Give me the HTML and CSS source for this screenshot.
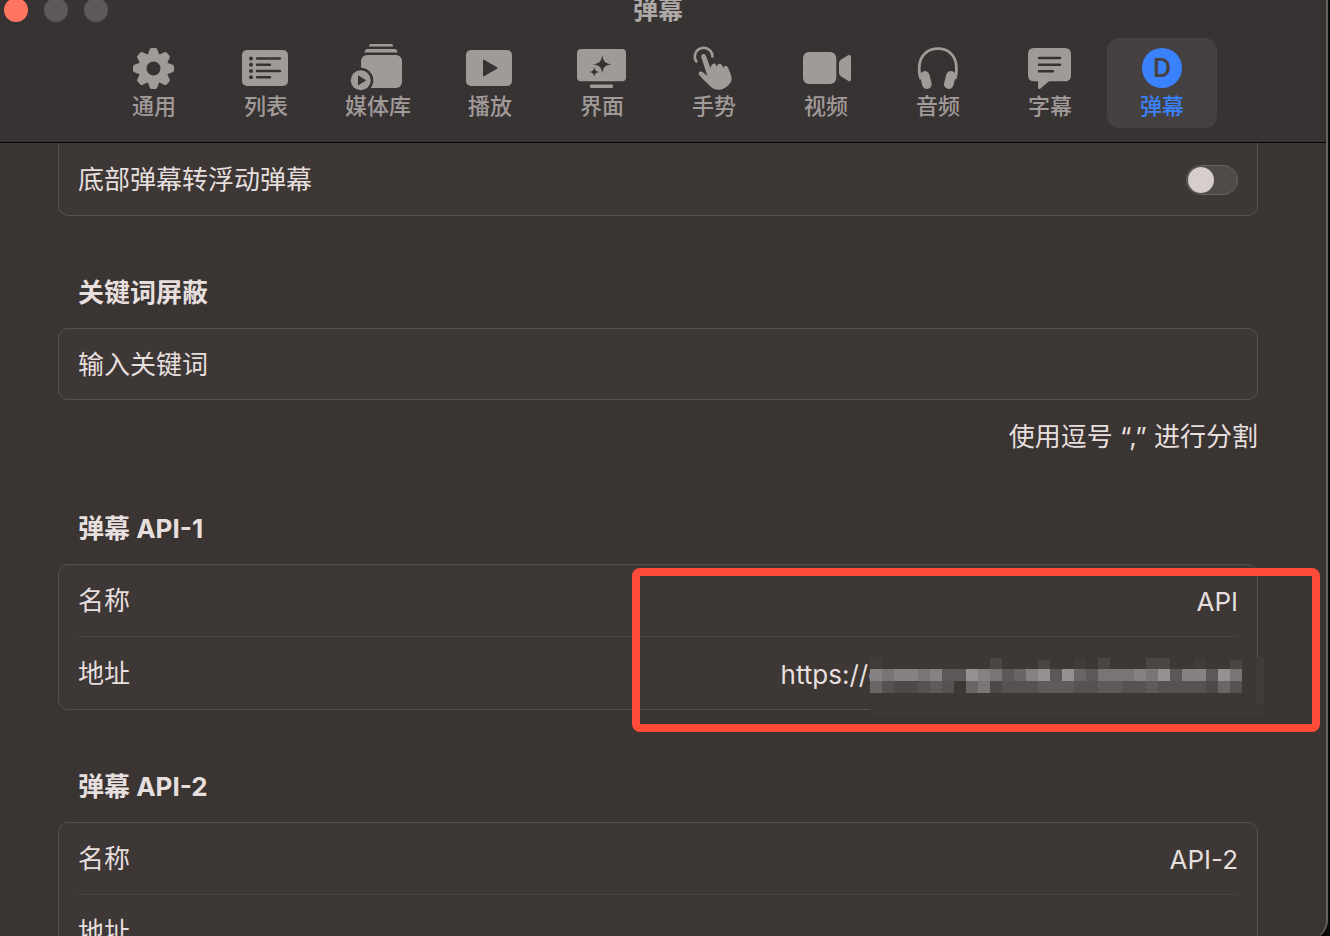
FILE: index.html
```html
<!DOCTYPE html>
<html lang="zh-CN">
<head>
<meta charset="utf-8">
<title>弹幕</title>
<link rel="stylesheet" href="styles.css">
</head>
<body>
<div class="window">
  <header class="toolbar">
    <div class="titlebar">
      <div class="lights">
        <button class="light light-close" aria-label="关闭"></button>
        <button class="light" aria-label="最小化"></button>
        <button class="light" aria-label="缩放"></button>
      </div>
      <h1 class="title">弹幕</h1>
    </div>
    <nav class="tabs">
      <button class="tab">
        <svg class="icon" viewBox="1 0 56 44"><g transform="translate(28.5 22.5)"><circle r="11" fill="none" stroke="currentColor" stroke-width="8"/><g fill="currentColor"><path id="teeth" d="M-6-13L-4-18.5Q-3.500-20.500-2-20.500H2Q3.500-20.500 4-18.500L6-13ZM-6 13L-4 18.500Q-3.500 20.500-2 20.500H2Q3.500 20.500 4 18.500L6 13Z"/><use href="#teeth" transform="rotate(45)"/><use href="#teeth" transform="rotate(90)"/><use href="#teeth" transform="rotate(135)"/></g></g></svg>
        <span>通用</span>
      </button>
      <button class="tab">
        <svg class="icon" viewBox="1 0 56 44"><rect x="5" y="4" width="46" height="36" rx="5" fill="currentColor"/><g class="cut"><circle cx="14" cy="12.500" r="2"/><circle cx="14" cy="18.800" r="2"/><circle cx="14" cy="25" r="2"/><circle cx="14" cy="31.300" r="2"/></g><path class="cut-line" d="M20 12.500H43M20 18.800H33M20 25H43M20 31.300H33"/></svg>
        <span>列表</span>
      </button>
      <button class="tab">
        <svg class="icon" viewBox="1 0 56 44"><g fill="currentColor"><path d="M21-2H43Q44-2 44 .5H20Q20-2 21-2Z"/><path d="M18 3H46Q48 3 48.500 6.500H15.500Q16 3 18 3Z"/><rect x="12" y="9" width="41" height="33" rx="6"/></g><circle class="cut" cx="11.700" cy="34.300" r="12.600"/><circle cx="11.700" cy="34.300" r="10" fill="currentColor"/><path class="cut" d="M9 29.300L17.300 34.300L9 39.500Z"/></svg>
        <span>媒体库</span>
      </button>
      <button class="tab">
        <svg class="icon" viewBox="1 0 56 44"><rect x="5" y="4" width="46" height="36" rx="5" fill="currentColor"/><path class="cut" d="M22 14.600Q22 13 23.500 14L36 21.300Q37 22 36 22.700L23.500 30Q22 31 22 29.400Z"/></svg>
        <span>播放</span>
      </button>
      <button class="tab">
        <svg class="icon" viewBox="1 0 56 44"><g fill="currentColor"><rect x="4" y="3" width="49" height="32.300" rx="4"/><rect x="17" y="38.600" width="23" height="3.400" rx="1"/></g><path class="cut" d="M29.300 9C30.300 15.500 32 17.300 38.600 18.300C32 19.300 30.300 21 29.300 27.600C28.300 21 26.600 19.300 20 18.300C26.600 17.300 28.300 15.500 29.300 9ZM21.300 21C21.900 24.500 22.800 25.400 26.300 26C22.800 26.600 21.900 27.500 21.300 31C20.700 27.500 19.800 26.600 16.300 26C19.800 25.400 20.700 24.500 21.300 21Z"/></svg>
        <span>界面</span>
      </button>
      <button class="tab">
        <svg class="icon" viewBox="1 0 56 44"><path d="M12 16.400A8.800 8.800 0 1 1 27.400 11.500" fill="none" stroke="currentColor" stroke-width="2.600"/><path fill="currentColor" d="M16.300 11.200C15.500 8 19.800 6.800 20.900 9.800L25.600 22.600C26 16.800 30.400 16.400 31.200 19.200L32 21C32 17 36 16.600 37.200 19.600L38.400 22.400C38.200 19 41.800 18.600 43.200 22L46 29C48 35 44.500 39 40.500 41.500C36 44.500 30 45 25.500 40.500C22 37 17.500 33 14.200 29C12.400 26.200 15.800 24.400 18.200 26.600L22.400 30Z"/></svg>
        <span>手势</span>
      </button>
      <button class="tab">
        <svg class="icon" viewBox="1 0 56 44"><g fill="currentColor"><rect x="6" y="6" width="33.300" height="32" rx="6"/><path d="M42 17Q42 15.500 43.500 14L51 9.300Q54 8 54 11V33Q54 36.500 51 34.800L43.500 30Q42 28.500 42 27Z"/></g></svg>
        <span>视频</span>
      </button>
      <button class="tab">
        <svg class="icon" viewBox="1 0 56 44"><path d="M12 33C10 29 10 25 10.300 20C11.200 9 19 2.700 29 2.700C39 2.700 46.500 9 47.300 20C47.600 25 47.600 29 46 33" fill="none" stroke="currentColor" stroke-width="2.800"/><g fill="currentColor"><rect x="12" y="25" width="9.600" height="18" rx="4.500" transform="rotate(-14 17 34)"/><rect x="36" y="25" width="9.600" height="18" rx="4.500" transform="rotate(14 41 34)"/></g></svg>
        <span>音频</span>
      </button>
      <button class="tab">
        <svg class="icon" viewBox="1 0 56 44"><path fill="currentColor" d="M13 2H44Q50 2 50 8V29.300Q50 35.300 44 35.300H28L19.500 42.500Q17 44 17 41V35.300H13Q7 35.300 7 29.300V8Q7 2 13 2Z"/><path class="cut-line" d="M18 12H39M18 18.700H39M18 25.300H32"/></svg>
        <span>字幕</span>
      </button>
      <button class="tab tab-active" aria-current="page">
        <svg class="icon" viewBox="0 0 56 44"><circle cx="28" cy="22" r="20" fill="currentColor"/><text class="badge-letter" x="28" y="31" text-anchor="middle">D</text></svg>
        <span>弹幕</span>
      </button>
    </nav>
  </header>

  <main class="content">
    <section>
      <div class="card card-continued">
        <div class="row">
          <label for="float">底部弹幕转浮动弹幕</label>
          <input class="switch" type="checkbox" role="switch" id="float">
        </div>
      </div>
    </section>

    <section>
      <h2 class="heading"><label for="keyword">关键词屏蔽</label></h2>
      <div class="card">
        <div class="row row-single"><input class="field" type="text" id="keyword" placeholder="输入关键词"></div>
      </div>
      <p class="note">使用逗号 “,” 进行分割</p>
    </section>

    <section>
      <h2 class="heading">弹幕 API-1</h2>
      <div class="card">
        <div class="row">
          <label for="name1">名称</label>
          <input class="field field-end" type="text" id="name1" value="API">
        </div>
        <div class="row">
          <label for="url1">地址</label>
          <input class="field field-end field-redacted" type="text" id="url1" value="https://c">
          <svg class="mosaic" viewBox="0 0 394 60" shape-rendering="crispEdges" aria-hidden="true">
            <path fill="#3d3736" d="M0 0H394V60H0Z"/>
            <path fill="#413b3a" d="M0 0H12V11H0ZM204 0H216V11H204ZM324 0H336V11H324ZM387 0H394V46H387Z"/>
            <path fill="#4b4544" d="M120 0H132V11H120ZM168 2H180V11H168ZM228 0H240V11H228ZM276 0H300V11H276ZM360 2H372V11H360Z"/>
            <path fill="#5d5857" d="M72 11H96V23H72ZM132 11H156V23H132ZM180 11H192V23H180ZM216 11H228V23H216ZM300 11H312V23H300ZM336 11H348V23H336Z"/>
            <path fill="#6a6564" d="M144 11H156V23H144ZM204 11H216V23H204Z"/>
            <path fill="#7a7574" d="M12 11H24V23H12ZM48 11H60V23H48ZM120 11H132V23H120ZM228 11H264V23H228ZM276 11H288V23H276ZM360 11H372V23H360Z"/>
            <path fill="#878281" d="M0 11H12V23H0ZM24 11H48V23H24ZM60 11H72V23H60ZM108 11H120V23H108ZM156 11H168V23H156ZM264 11H276V23H264ZM312 11H336V23H312Z"/>
            <path fill="#969190" d="M96 11H108V23H96ZM168 11H180V23H168ZM192 11H204V23H192ZM288 11H300V23H288ZM348 11H360V23H348Z"/>
            <path fill="#575251" d="M12 23H84V35H12ZM132 23H372V35H132Z"/>
            <path fill="#4e4948" d="M24 23H48V35H24ZM120 23H132V35H120ZM336 23H348V35H336Z"/>
            <path fill="#605b5a" d="M60 23H72V35H60ZM168 23H204V35H168ZM228 23H252V35H228ZM276 23H288V35H276Z"/>
            <path fill="#6b6665" d="M0 23H12V35H0ZM96 23H108V35H96ZM348 23H360V35H348Z"/>
            <path fill="#7b7675" d="M108 23H120V35H108Z"/>
          </svg>
        </div>
        <div class="highlight"></div>
      </div>
    </section>

    <section>
      <h2 class="heading">弹幕 API-2</h2>
      <div class="card">
        <div class="row">
          <label for="name2">名称</label>
          <input class="field field-end" type="text" id="name2" value="API-2">
        </div>
        <div class="row">
          <label for="url2">地址</label>
          <input class="field field-end" type="text" id="url2">
        </div>
      </div>
    </section>
  </main>
</div>
</body>
</html>
```
FILE: styles.css
```css
:root {
  --toolbar: #383333;
  --bg: #3a3433;
  --card: #3d3736;
  --line: #575150;
  --text: #e6dfde;
  --muted: #a09a99;
  --accent: #3a82fc;
}

* {
  box-sizing: border-box;
}

body {
  margin: 0;
  height: 100vh;
  overflow: hidden;
  background: #0c0808;
  color: var(--text);
  font-family: Inter, "Noto Sans CJK SC", sans-serif;
  font-size: 26px;
}

button,
input {
  margin: 0;
  padding: 0;
  border: 0;
  background: none;
  color: inherit;
  font: inherit;
}

.window {
  display: flex;
  flex-direction: column;
  height: calc(100vh + 4px);
  margin-right: 2px;
  overflow: hidden;
  border-right: 2px solid #676160;
  border-radius: 0 0 20px 0;
  background: var(--bg);
}

.toolbar {
  flex: none;
  padding: 0 10px 14px 0;
  border-bottom: 1px solid #050303;
  background: var(--toolbar);
}

.titlebar {
  display: grid;
  grid-template-rows: 20px;
  grid-template-columns: 1fr auto 1fr;
  align-items: center;
  height: 20px;
  margin-bottom: 18px;
}

.lights {
  display: flex;
  gap: 16px;
  padding-left: 4px;
}

.light {
  width: 24px;
  height: 24px;
  border-radius: 50%;
  background: #5d5959;
}

.light-close {
  background: #ff7560;
}

.title {
  margin: 0;
  color: #aea8a7;
  font-size: 25px;
  line-height: 20px;
  font-weight: 700;
}

.tabs {
  display: flex;
  justify-content: center;
  gap: 2px;
}

.tab {
  display: flex;
  flex-direction: column;
  align-items: center;
  gap: 2px;
  width: 110px;
  height: 90px;
  padding-top: 8px;
  border-radius: 12px;
  color: var(--muted);
  font-size: 22px;
  line-height: 28px;
  font-weight: 500;
}

.tab-active {
  background: #454141;
  color: var(--accent);
}

.icon {
  flex: none;
  width: 56px;
  height: 44px;
  overflow: visible;
}

.cut {
  fill: var(--toolbar);
}

.cut-line {
  fill: none;
  stroke: var(--toolbar);
  stroke-width: 2.4;
  stroke-linecap: round;
}

.badge-letter {
  fill: #454141;
  font-size: 25px;
  font-weight: 600;
}

.content {
  display: flex;
  flex: 1;
  flex-direction: column;
  gap: 59px;
  min-height: 0;
  padding: 0 68px 0 58px;
}

.heading {
  margin: 0 20px 17px;
  font-size: 26px;
  line-height: 36px;
  font-weight: 700;
}

.card {
  position: relative;
  border: 1px solid var(--line);
  border-radius: 10px;
  background: var(--card);
}

.card-continued {
  border-top: 0;
  border-radius: 0 0 10px 10px;
}

.row {
  position: relative;
  display: flex;
  align-items: center;
  justify-content: space-between;
  gap: 20px;
  height: 72px;
  padding: 0 19px;
}

.row-single {
  height: 70px;
}

.row + .row,
.card-continued .row {
  padding-top: 2px;
}

.row + .row::before {
  content: "";
  position: absolute;
  top: -1px;
  left: 19px;
  right: 19px;
  height: 1px;
  background: #494342;
}

.row label {
  flex: none;
  line-height: 36px;
}

.field {
  flex: 1;
  min-width: 0;
  height: 40px;
  outline: 0;
}

.field::placeholder {
  color: var(--text);
  opacity: 1;
}

.field-end {
  text-align: right;
}

.field-redacted {
  padding-right: 355px;
}

.mosaic {
  position: absolute;
  top: 21px;
  right: -7px;
  width: 394px;
  height: 60px;
}

.highlight {
  position: absolute;
  top: 3px;
  right: -63px;
  width: 688px;
  height: 164px;
  border: 8px solid #ff4b37;
  border-radius: 8px;
  pointer-events: none;
}

.switch {
  display: flex;
  align-items: center;
  width: 52px;
  height: 30px;
  padding: 0 1px;
  border: 1px solid #676160;
  border-radius: 15px;
  background: #504a49;
  appearance: none;
}

.switch::before {
  content: "";
  width: 26px;
  height: 26px;
  border-radius: 50%;
  background: #d5cecd;
}

.switch:checked {
  justify-content: flex-end;
  background: var(--accent);
}

.note {
  margin: 22px 0 0;
  line-height: 30px;
  text-align: right;
}
```
